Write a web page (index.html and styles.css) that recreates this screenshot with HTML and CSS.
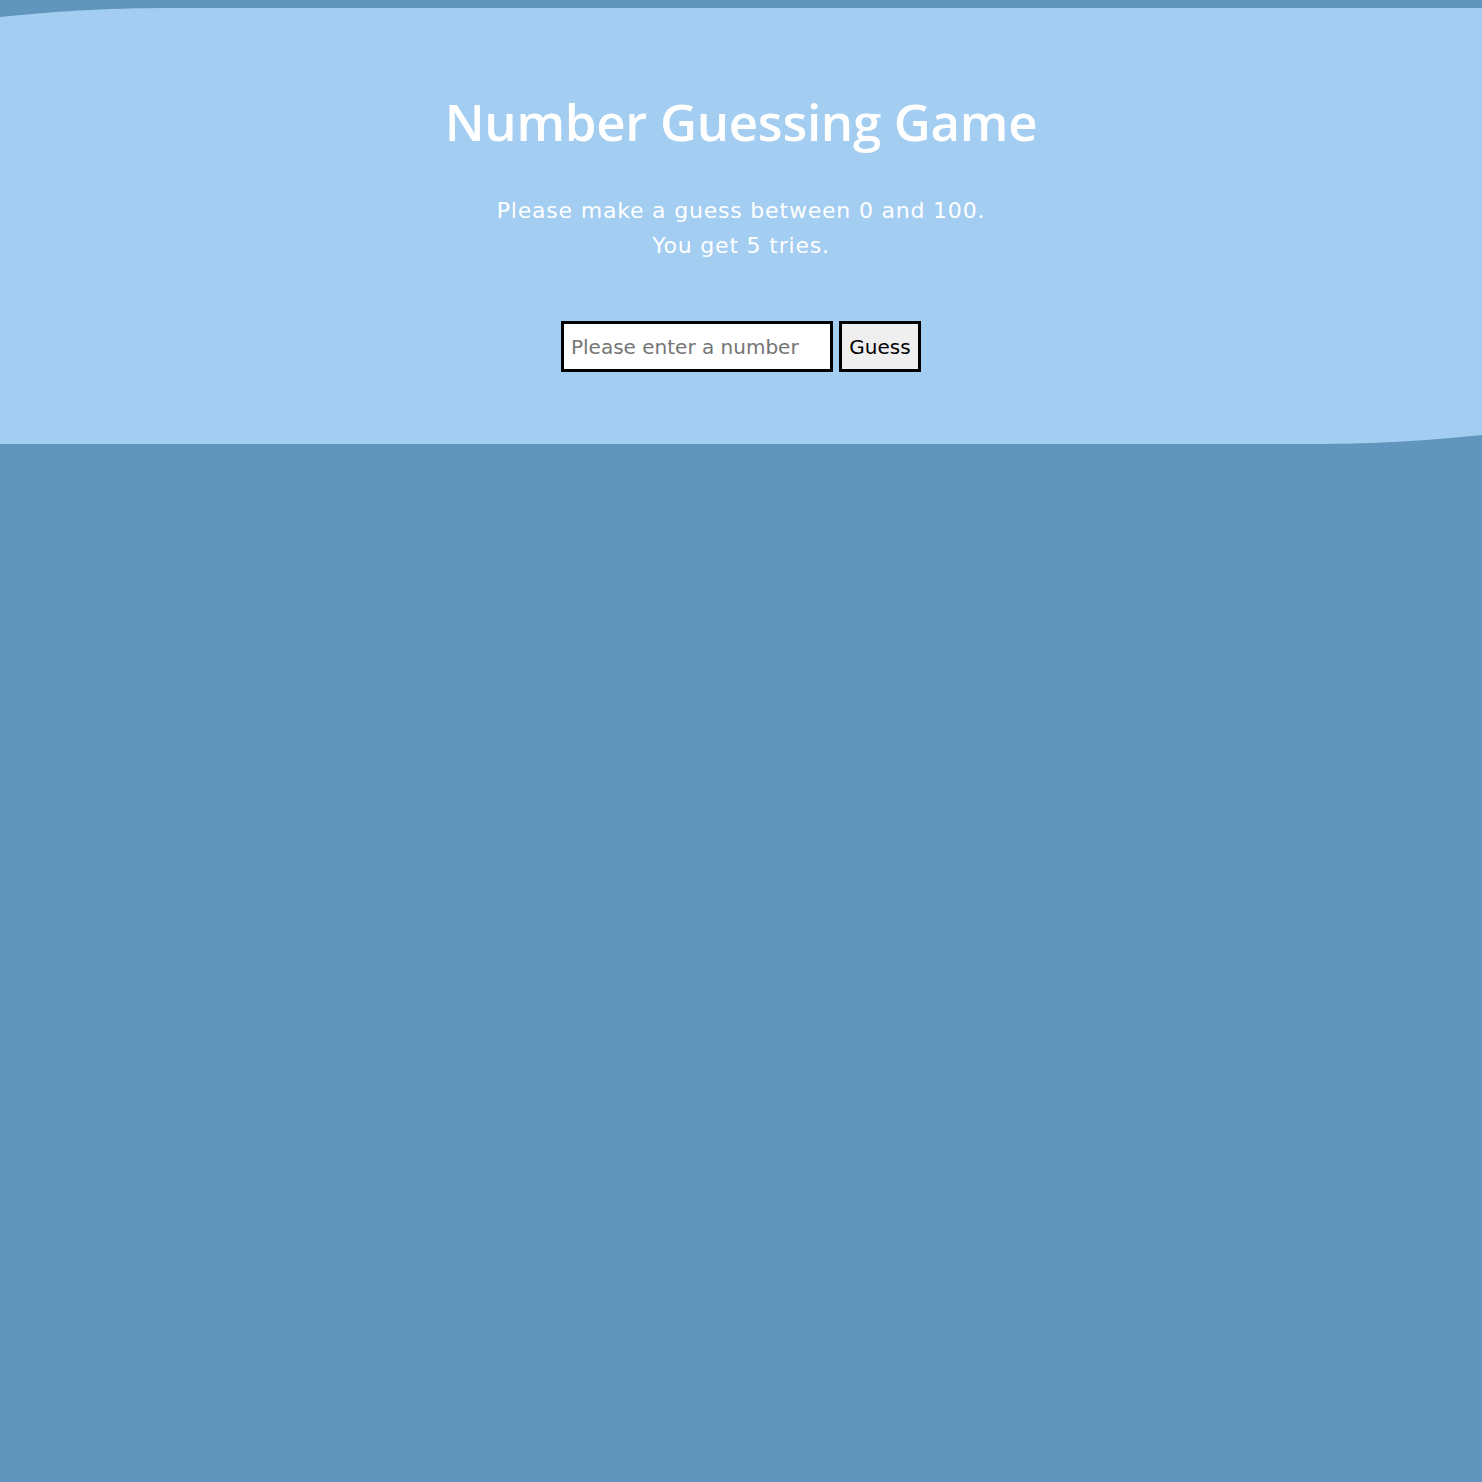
FILE: index.html
```html
<!DOCTYPE html>
<html lang="en">
<head>
<meta charset="utf-8">
<title>Number Guessing Game</title>
<link rel="stylesheet" href="styles.css">
</head>
<body>
<main class="panel">
  <h1 class="title">Number Guessing Game</h1>
  <p class="intro">Please make a guess between 0 and 100.<br>You get 5 tries.</p>
  <form class="guess-form" onsubmit="return false">
    <input class="guess-input" type="text" placeholder="Please enter a number">
    <button class="guess-button" type="submit">Guess</button>
  </form>
</main>
</body>
</html>
```
FILE: styles.css
```css
html, body {
  margin: 0;
  padding: 0;
}
body {
  background: #6096bb;
  min-height: 1482px;
  padding-top: 8px;
  box-sizing: border-box;
  font-family: "DejaVu Sans", "Open Sans", sans-serif;
}
.panel {
  background: #a3cdf1;
  height: 436px;
  box-sizing: border-box;
  clip-path: path('M0 9 C 40 5, 90 0.5, 160 0 L 1482 0 L 1482 427 C 1442 431, 1392 435.5, 1322 436 L 0 436 Z');
  display: flex;
  flex-direction: column;
  align-items: center;
  padding-top: 83px;
  color: #fff;
}
.title {
  margin: 0;
  font-family: "Open Sans", sans-serif;
  font-size: 51px;
  font-weight: 600;
  line-height: 60px;
  letter-spacing: -0.3px;
}
.intro {
  margin: 42px 0 0;
  font-size: 22px;
  line-height: 35px;
  letter-spacing: 0.8px;
  text-align: center;
}
.guess-form {
  margin-top: 58px;
  display: flex;
  gap: 6px;
}
.guess-input {
  width: 272px;
  height: 51px;
  box-sizing: border-box;
  border: 3px solid #000;
  padding: 0 7px;
  font-family: inherit;
  font-size: 20px;
  background: #fff;
  color: #000;
  outline: none;
}
.guess-input::placeholder {
  color: #757575;
}
.guess-button {
  width: 82px;
  height: 51px;
  box-sizing: border-box;
  border: 3px solid #000;
  padding: 0;
  background: #efefef;
  font-family: inherit;
  font-size: 20px;
  color: #000;
}
```
